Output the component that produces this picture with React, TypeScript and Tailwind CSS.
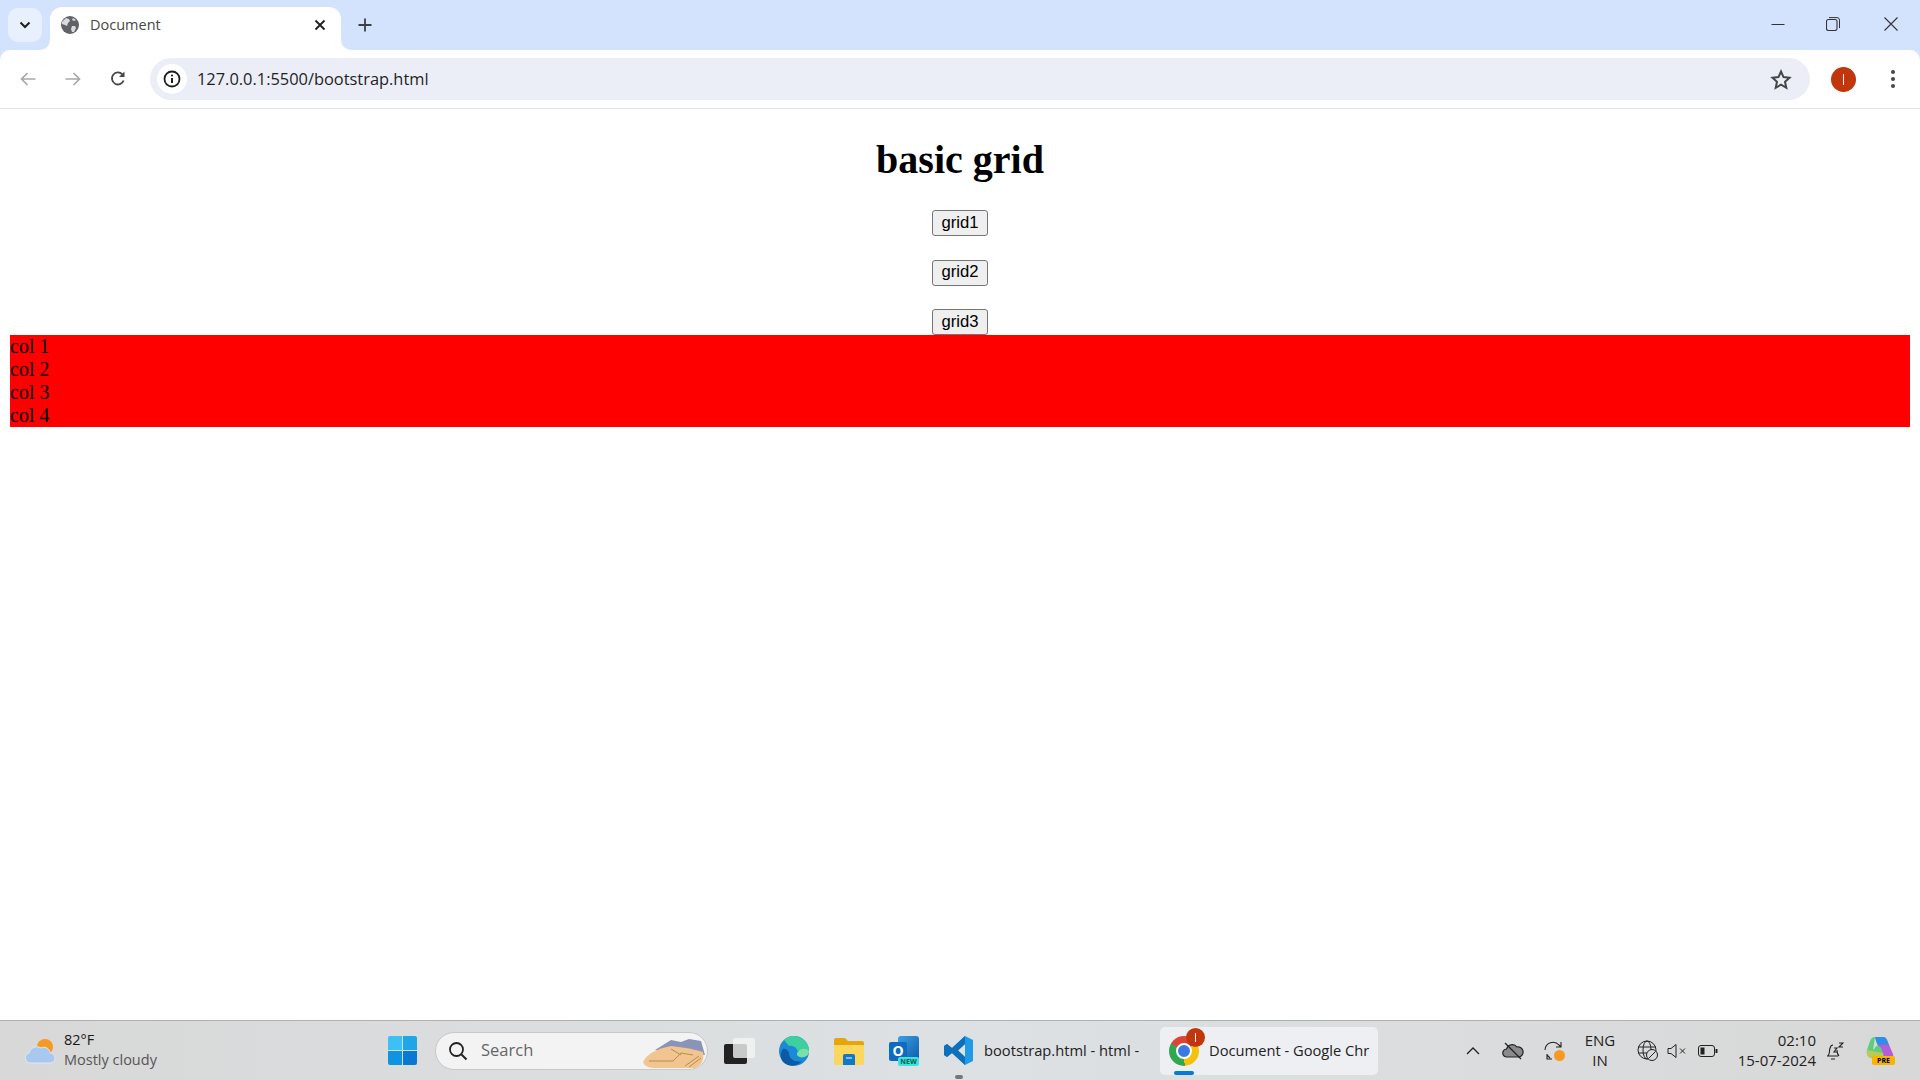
const ui = "font-['Open_Sans','Noto_Sans',sans-serif]";

const GridButton = ({ label }: { label: string }) => (
  <button className="h-[26px] w-[56px] rounded-[3px] border border-[#767676] bg-[#efefef] font-['Liberation_Sans',sans-serif] text-[16.67px] leading-none text-black">
    {label}
  </button>
);

const Globe = () => (
  <svg className="shrink-0" width="18" height="18" viewBox="0 0 18 18">
    <circle cx="9" cy="9" r="9" fill="#5f6368" />
    <path d="M5 2l3 1 1 2-2 2-1 3-2-1-3-1V6zM11 10l3 0 1 2-2 4-2 0-1-3zM12 2l3 2-2 1-2-1z" fill="#d9dbdd" />
  </svg>
);

const TabStrip = () => (
  <div className="flex h-[50px] shrink-0 items-end bg-[#d3e3fd]">
    <div className="mb-[8px] ml-[8px] flex h-[34px] w-[34px] items-center justify-center rounded-[10px] bg-[#e9f0fd]">
      <svg width="12" height="8" viewBox="0 0 12 8">
        <path d="M1.5 1.5L6 6l4.500-4.500" fill="none" stroke="#1f1f1f" strokeWidth="2" />
      </svg>
    </div>
    <div className={`relative ml-[8px] flex h-[43px] w-[291px] items-center rounded-t-[12px] bg-white pb-[7px] pl-[11px] pr-[15px] ${ui}`}>
      <div className="absolute -left-[10px] bottom-0 h-[10px] w-[10px] bg-white">
        <div className="h-full w-full rounded-br-[10px] bg-[#d3e3fd]" />
      </div>
      <div className="absolute -right-[10px] bottom-0 h-[10px] w-[10px] bg-white">
        <div className="h-full w-full rounded-bl-[10px] bg-[#d3e3fd]" />
      </div>
      <Globe />
      <span className="ml-[11px] flex-1 text-[14.5px] text-[#474747]">Document</span>
      <svg width="12" height="12" viewBox="0 0 12 12">
        <path d="M1.500 1.500l9 9M10.500 1.500l-9 9" stroke="#1f1f1f" strokeWidth="1.800" />
      </svg>
    </div>
    <svg className="mb-[18px] ml-[17px]" width="14" height="14" viewBox="0 0 14 14">
      <path d="M7 0.500v13M0.500 7h13" stroke="#3c4043" strokeWidth="1.800" />
    </svg>
    <div className="flex-1" />
    <div className="mb-[19px] flex items-center">
      <svg width="14" height="14" viewBox="0 0 14 14">
        <path d="M0.500 7.500h13" stroke="#333" strokeWidth="1" />
      </svg>
      <svg className="ml-[41px]" width="14" height="14" viewBox="0 0 14 14">
        <rect x="0.500" y="2.500" width="10.500" height="11" rx="2" fill="none" stroke="#333" strokeWidth="1.100" />
        <path d="M3 0.600h8a2.500 2.500 0 0 1 2.500 2.500v8" fill="none" stroke="#333" strokeWidth="1" />
      </svg>
      <svg className="ml-[44px] mr-[22px]" width="14" height="14" viewBox="0 0 14 14">
        <path d="M0.500 0.500l13 13M13.500 0.500l-13 13" stroke="#333" strokeWidth="1.100" />
      </svg>
    </div>
  </div>
);

const Toolbar = () => (
  <div className="h-[59px] shrink-0 bg-[#d3e3fd]">
    <div className="flex h-full items-center rounded-t-[10px] border-b border-[#e3e3e3] bg-white">
      <svg className="ml-[20px]" width="16" height="14" viewBox="0 0 16 14">
        <path d="M15.500 7H1.500M7.500 1L1.500 7l6 6" fill="none" stroke="#a6a8ab" strokeWidth="1.700" />
      </svg>
      <svg className="ml-[29px]" width="16" height="14" viewBox="0 0 16 14">
        <path d="M0.500 7h14M8.500 1l6 6-6 6" fill="none" stroke="#a6a8ab" strokeWidth="1.700" />
      </svg>
      <svg className="ml-[29px]" width="16" height="16" viewBox="0 0 16 16">
        <path d="M13.600 9.500A6 6 0 1 1 12.300 3.300" fill="none" stroke="#444746" strokeWidth="1.800" />
        <path d="M14.500 0.500v5.500H9z" fill="#444746" />
      </svg>
      <div className="ml-[24px] flex h-[42px] flex-1 items-center rounded-full bg-[#ebeef7] pl-[7px] pr-[18px]">
        <div className="flex h-[30px] w-[30px] items-center justify-center rounded-full bg-white">
          <svg width="18" height="18" viewBox="0 0 18 18">
            <circle cx="9" cy="9" r="7.500" fill="none" stroke="#1f1f1f" strokeWidth="1.800" />
            <path d="M9 8v5" stroke="#1f1f1f" strokeWidth="2" />
            <circle cx="9" cy="5.500" r="1.100" fill="#1f1f1f" />
          </svg>
        </div>
        <span className={`ml-[10px] flex-1 text-[16.4px] text-[#1f1f1f] ${ui}`}>127.0.0.1:5500/bootstrap.html</span>
        <svg width="22" height="21" viewBox="0 0 22 21">
          <path d="M11 2.500l2.500 5.600 6 .6-4.500 4.100 1.300 6L11 15.700l-5.300 3.100 1.300-6-4.500-4.100 6-.6z" fill="none" stroke="#474747" strokeWidth="2" />
        </svg>
      </div>
      <div className="ml-[21px] flex h-[25px] w-[25px] items-center justify-center rounded-full bg-[#c1360c]">
        <div className="h-[11px] w-[1px] bg-white" />
      </div>
      <div className="ml-[35px] mr-[25px] flex flex-col gap-[3px]">
        <div className="h-[4px] w-[4px] rounded-full bg-[#474747]" />
        <div className="h-[4px] w-[4px] rounded-full bg-[#474747]" />
        <div className="h-[4px] w-[4px] rounded-full bg-[#474747]" />
      </div>
    </div>
  </div>
);

const Page = () => (
  <main className="flex-1 bg-white px-[10px] pt-[28px] font-['Liberation_Serif',serif] text-black">
    <h1 className="mb-[27px] h-[46px] text-center text-[40px] font-bold leading-[46px]">basic grid</h1>
    <div className="flex flex-col items-center gap-[23.5px]">
      <GridButton label="grid1" />
      <GridButton label="grid2" />
      <GridButton label="grid3" />
    </div>
    <div className="bg-[#ff0000] text-[20px] leading-[23px]">
      <div>col 1</div>
      <div>col 2</div>
      <div>col 3</div>
      <div>col 4</div>
    </div>
  </main>
);

const Taskbar = () => (
  <div className={`flex h-[60px] shrink-0 items-center border-t border-[#b0b0b0] bg-gradient-to-r from-[#d8d8d8] via-[#dde1e3] to-[#d8d8d8] ${ui}`}>
    {/* weather */}
    <svg className="ml-[24px]" width="32" height="28" viewBox="0 0 32 28">
      <circle cx="21" cy="10" r="8" fill="#f59a1f" />
      <path d="M6 26a5 5 0 0 1-1-9.800A8 8 0 0 1 17 11a6 6 0 0 1 9 5 5 5 0 0 1 0 10z" fill="#a9c8ee" stroke="#dbe8f8" strokeWidth="1" />
    </svg>
    <div className="mb-[2px] ml-[8px] flex w-[120px] flex-col text-[14.5px] leading-[20px]">
      <span className="text-[#1a1a1a]">82°F</span>
      <span className="text-[#555]">Mostly cloudy</span>
    </div>

    {/* start and search */}
    <div className="ml-[204px] grid h-[29px] w-[29px] grid-cols-2 gap-[1px]">
      <div className="rounded-tl-[2px] bg-[#3cc0f5]" />
      <div className="rounded-tr-[2px] bg-[#1ea5ea]" />
      <div className="rounded-bl-[2px] bg-[#0f94e3]" />
      <div className="rounded-br-[2px] bg-[#0679d4]" />
    </div>
    <div className="relative ml-[18px] flex h-[38px] w-[273px] items-center overflow-hidden rounded-full border border-[#c8c8c8] bg-[#f3f3f3] pl-[12px]">
      <svg width="20" height="20" viewBox="0 0 20 20">
        <circle cx="8.500" cy="8.500" r="6.500" fill="none" stroke="#222" strokeWidth="1.800" />
        <path d="M13.500 13.500l5 5" stroke="#222" strokeWidth="2" />
      </svg>
      <span className="ml-[13px] text-[16.5px] text-[#666]">Search</span>
      <svg className="absolute bottom-0 right-0" width="66" height="33" viewBox="0 0 66 33">
        <path d="M14 14L30 4l10 2 8-3 12 2 4 14z" fill="#8a93b8" />
        <path d="M2 26Q8 14 30 10 50 12 62 16 64 28 54 32H14Q4 32 2 26z" fill="#f0c590" />
        <path d="M8 25l24 0 8-8 12 2M30 13l10 6M44 30l14-10M48 31l12-9" fill="none" stroke="#b98a50" strokeWidth="1" />
      </svg>
    </div>

    {/* pinned apps */}
    <div className="relative ml-[16px] h-[26px] w-[31px]">
      <div className="absolute bottom-0 left-0 h-[20px] w-[23px] rounded-[2px] bg-[#222]" />
      <div className="absolute right-0 top-0 h-[20px] w-[22px] rounded-[2px] bg-[#f4f4f4]/80" />
    </div>
    <svg className="ml-[24px]" width="30" height="30" viewBox="0 0 30 30">
      <circle cx="15" cy="15" r="15" fill="#1b89d6" />
      <path d="M5 4A15 15 0 0 1 30 15c0 5-5 7-9 6-3-1-4-3-2-5-1-5-6-7-9-6z" fill="#3ecfa0" />
      <path d="M10 17c0 6 6 10 13 8-5 6-14 6-19 1-3-4-3-9 0-13 2-1 5 1 6 4z" fill="#0c59a4" />
      <path d="M19 16c-2 2-1 4 2 5 4 1 9-1 9-6a7 7 0 0 0-11 1z" fill="#7be0a8" />
    </svg>
    <svg className="ml-[25px]" width="30" height="28" viewBox="0 0 30 28">
      <path d="M0 3a2 2 0 0 1 2-2h9l3 3h14a2 2 0 0 1 2 2v4H0z" fill="#e5a50f" />
      <path d="M0 8h30v18a2 2 0 0 1-2 2H2a2 2 0 0 1-2-2z" fill="#fbd75b" />
      <path d="M9 19a2 2 0 0 1 2-2h8a2 2 0 0 1 2 2v9H9z" fill="#0f78c8" />
      <path d="M12 21h6" stroke="#cfe6f8" strokeWidth="1.200" />
    </svg>
    <div className="relative ml-[25px] h-[30px] w-[30px]">
      <div className="absolute left-[9px] top-0 h-[24px] w-[21px] rounded-[3px] bg-gradient-to-br from-[#3aa0e8] to-[#0f5ea8]" />
      <div className="absolute left-0 top-[6px] flex h-[19px] w-[18px] items-center justify-center rounded-[2px] bg-[#0f6cbd] text-[14px] font-bold leading-none text-white">O</div>
      <div className="absolute bottom-0 left-[9px] flex h-[9px] w-[21px] items-center justify-center rounded-[2px] bg-[#3fe0e8] text-[7px] font-bold leading-none text-[#063]">NEW</div>
    </div>
    <div className="relative ml-[24px] flex h-[58px] w-[201px] items-center">
      <svg className="shrink-0" width="31" height="31" viewBox="0 0 31 31">
        <path d="M22 1l8 4v21l-8 4-13-12-5 4-3-2v-9l3-2 5 4zM22 9l-7 6.500 7 6.500z" fill="#1f9ae8" />
        <path d="M22 1L9 13 4 9 1 11v9l3 2 5-4 13 12 0-8-7-6.500 7-6.500z" fill="#0f6fb8" />
      </svg>
      <span className="ml-[10px] whitespace-nowrap text-[14.7px] text-[#222]">bootstrap.html - html -</span>
      <div className="absolute bottom-[1px] left-[12px] h-[4px] w-[8px] rounded-full bg-[#777]" />
    </div>

    {/* active chrome */}
    <div className="relative ml-[16px] flex h-[48px] w-[218px] items-center rounded-[5px] bg-[#eeeff2] pl-[9px]">
      <div className="relative h-[30px] w-[30px] shrink-0">
        <div className="h-full w-full rounded-full bg-[conic-gradient(from_-60deg,#db4437_0_33%,#f4c20d_33%_66%,#2fa84f_66%_100%)]" />
        <div className="absolute left-[7px] top-[7px] h-[16px] w-[16px] rounded-full border-2 border-white bg-[#3b78e7]" />
        <div className="absolute -right-[6px] -top-[8px] flex h-[19px] w-[19px] items-center justify-center rounded-full bg-[#c1360c]">
          <div className="h-[9px] w-[1px] bg-white" />
        </div>
      </div>
      <span className="ml-[10px] whitespace-nowrap text-[14.7px] text-[#222]">Document - Google Chr</span>
      <div className="absolute bottom-0 left-[14px] h-[4px] w-[20px] rounded-full bg-[#0a78d4]" />
    </div>

    {/* tray */}
    <svg className="ml-[88px]" width="14" height="8" viewBox="0 0 14 8">
      <path d="M1 7l6-6 6 6" fill="none" stroke="#222" strokeWidth="1.300" />
    </svg>
    <svg className="ml-[22px]" width="22" height="18" viewBox="0 0 22 18">
      <path d="M5 15a4 4 0 0 1-.5-8A6 6 0 0 1 15 5a4.500 4.500 0 0 1 2 10z" fill="#8a8a8a" stroke="#222" strokeWidth="1.200" />
      <path d="M3 1l16 16" stroke="#222" strokeWidth="1.300" />
    </svg>
    <div className="relative ml-[19px] h-[22px] w-[22px]">
      <svg width="22" height="22" viewBox="0 0 22 22">
        <path d="M2 10A8 8 0 0 1 16 5l2 2M18 2v5h-5M4 14v5h5M4 15l3 3" fill="none" stroke="#222" strokeWidth="1.100" />
      </svg>
      <div className="absolute bottom-[1px] right-0 h-[11px] w-[11px] rounded-full bg-[#f59a1f]" />
    </div>
    <div className="mb-[2px] ml-[20px] flex w-[30px] flex-col items-center text-[15px] leading-[20px] text-[#222]">
      <span>ENG</span>
      <span>IN</span>
    </div>
    <svg className="ml-[22px]" width="21" height="21" viewBox="0 0 21 21">
      <circle cx="10" cy="10" r="9" fill="none" stroke="#222" strokeWidth="1" />
      <ellipse cx="10" cy="10" rx="4" ry="9" fill="none" stroke="#222" strokeWidth="1" />
      <path d="M1 7h18M1 13h18" stroke="#222" strokeWidth="1" />
      <circle cx="15" cy="15" r="5.500" fill="#d9d9d9" stroke="#222" strokeWidth="1" />
      <path d="M11.500 18.500l7-7" stroke="#222" strokeWidth="1" />
    </svg>
    <svg className="ml-[9px]" width="20" height="16" viewBox="0 0 20 16">
      <path d="M1 5.500h3L9 1.500v13l-5-4H1z" fill="none" stroke="#222" strokeWidth="1" />
      <path d="M13 5.500l5 5M18 5.500l-5 5" stroke="#222" strokeWidth="1" />
    </svg>
    <svg className="ml-[11px]" width="20" height="14" viewBox="0 0 20 14">
      <rect x="0.500" y="1.500" width="16" height="11" rx="2.500" fill="none" stroke="#222" strokeWidth="1" />
      <rect x="2.500" y="3.500" width="4" height="7" fill="#222" />
      <path d="M17.500 5h2v4h-2z" fill="#222" />
    </svg>
    <div className="mb-[2px] ml-[19px] flex w-[79px] flex-col items-end text-[15px] leading-[20px] text-[#222]">
      <span>02:10</span>
      <span className="whitespace-nowrap">15-07-2024</span>
    </div>
    <svg className="ml-[10px]" width="18" height="20" viewBox="0 0 18 20">
      <path d="M2 15c2-2 1-5 2-8 .6-2 2-3 3-3M1 15h11M11 9c0 3 0 4 2 6M5 18h4" fill="none" stroke="#222" strokeWidth="1.100" />
      <path d="M8 7h3l-3 4h3M13 2h4l-4 4h4" fill="none" stroke="#222" strokeWidth="1.100" />
    </svg>
    <div className="relative ml-[22px] h-[29px] w-[29px]">
      <svg width="29" height="26" viewBox="0 0 29 26">
        <path d="M9 1h8c2 0 3 1 4 3l6 14c1 3-1 5-4 5h-6l-5-14C11 6 10 4 9 1z" fill="#b65cd8" />
        <path d="M9 1h8c2 0 3 1 4 3l2 6c-3-2-8-2-11 0L10 5C9.600 3 9.300 2 9 1z" fill="#2f8fe8" />
        <path d="M9 1C6 1 5 3 4 5L1 14c-1 4 1 8 5 8h8c3 0 4-2 3-5l-2-5c-2-3-5-3-6 0L7 14z" fill="#5ccf7a" />
        <path d="M1 14c-1 4 1 8 5 8h8c3 0 4-2 3-5z" fill="#e8c34a" opacity="0.700" />
      </svg>
      <div className="absolute bottom-0 left-[6px] flex h-[9px] w-[23px] items-center justify-center rounded-[2px] bg-[#f7b500] text-[7px] font-bold leading-none text-black">PRE</div>
    </div>
  </div>
);

const App = () => (
  <div className="flex h-screen w-full flex-col overflow-hidden">
    <TabStrip />
    <Toolbar />
    <Page />
    <Taskbar />
  </div>
);

export default App;
